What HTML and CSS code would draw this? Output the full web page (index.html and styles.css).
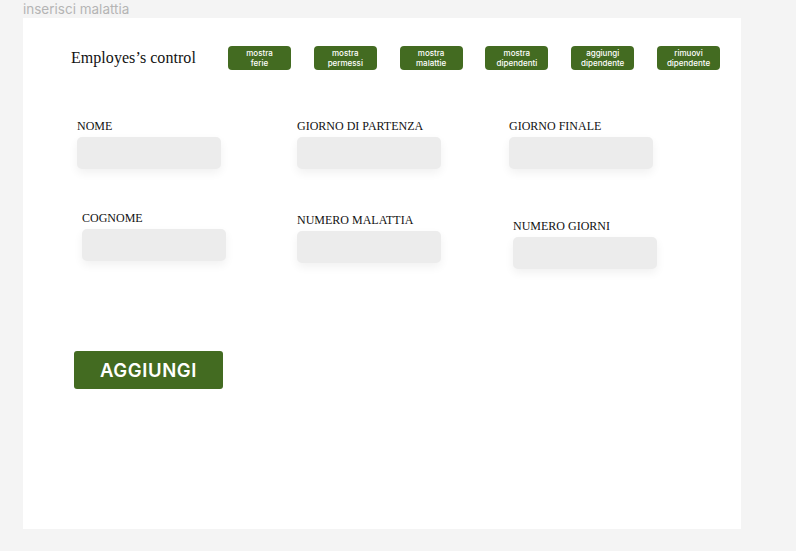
FILE: index.html
```html
<!DOCTYPE html>
<html lang="it">
<head>
<meta charset="utf-8">
<title>inserisci malattia</title>
<link rel="stylesheet" href="styles.css">
</head>
<body>
  <div class="caption">inserisci malattia</div>
  <main class="frame">
    <header class="topbar">
      <h1 class="brand">Employes’s control</h1>
      <nav class="nav">
        <button class="nav-btn">mostra<br>ferie</button>
        <button class="nav-btn">mostra<br>permessi</button>
        <button class="nav-btn">mostra<br>malattie</button>
        <button class="nav-btn">mostra<br>dipendenti</button>
        <button class="nav-btn">aggiungi<br>dipendente</button>
        <button class="nav-btn">rimuovi<br>dipendente</button>
      </nav>
    </header>

    <form class="fields">
      <label class="field">
        <span class="field-label">NOME</span>
        <span class="input"></span>
      </label>
      <label class="field">
        <span class="field-label">GIORNO DI PARTENZA</span>
        <span class="input"></span>
      </label>
      <label class="field">
        <span class="field-label">GIORNO FINALE</span>
        <span class="input"></span>
      </label>

      <label class="field row2 shift-x5">
        <span class="field-label">COGNOME</span>
        <span class="input"></span>
      </label>
      <label class="field row2 drop-2">
        <span class="field-label">NUMERO MALATTIA</span>
        <span class="input"></span>
      </label>
      <label class="field row2 shift-x4 drop-8">
        <span class="field-label">NUMERO GIORNI</span>
        <span class="input"></span>
      </label>
    </form>

    <button class="submit">AGGIUNGI</button>
  </main>
</body>
</html>
```

FILE: styles.css
```css
* { box-sizing: border-box; }

html, body {
  margin: 0;
  padding: 0;
  background: #f4f4f4;
  height: 551px;
  overflow: hidden;
}

.caption {
  font-family: Inter, "Liberation Sans", sans-serif;
  font-size: 13.5px;
  line-height: 18px;
  color: #b4b4b4;
  padding-left: 23px;
  height: 18px;
}

.frame {
  margin-left: 23px;
  width: 718px;
  height: 511px;
  background: #ffffff;
  padding-top: 28px;
}

.topbar {
  display: flex;
  align-items: center;
  padding-left: 48px;
  height: 24px;
}

.brand {
  margin: 0;
  font-family: "Liberation Serif", serif;
  font-weight: 400;
  font-size: 16px;
  line-height: 20px;
  color: #111;
  width: 157px;
  letter-spacing: 0.05px;
}

.nav {
  display: flex;
  gap: 22.8px;
}

.nav-btn {
  width: 63px;
  height: 24px;
  padding: 0;
  border: 0;
  border-radius: 4px;
  background: #436b21;
  color: #fff;
  font-family: Inter, "Liberation Sans", sans-serif;
  font-size: 8px;
  font-weight: 500;
  line-height: 10.5px;
  text-align: center;
}

.fields {
  display: grid;
  grid-template-columns: 220px 212px 150px;
  row-gap: 42px;
  padding-left: 54px;
  margin: 49px 0 0 0;
  align-items: start;
}

.field {
  display: flex;
  flex-direction: column;
  gap: 4px;
}

.field-label {
  font-family: "Liberation Serif", serif;
  font-size: 12px;
  line-height: 14px;
  letter-spacing: 0;
  color: #111;
}

.input {
  display: block;
  width: 144px;
  height: 32px;
  background: #ececec;
  border-radius: 5px;
  box-shadow: 0 4px 10px rgba(0, 0, 0, 0.06);
}

.shift-x5 { margin-left: 5px; }
.shift-x4 { margin-left: 4px; }
.drop-2 { margin-top: 2px; }
.drop-8 { margin-top: 8px; }

.submit {
  display: block;
  margin: 82px 0 0 51px;
  width: 149px;
  height: 38px;
  border: 0;
  border-radius: 3px;
  background: #436b21;
  color: #fff;
  font-family: Inter, "Liberation Sans", sans-serif;
  font-size: 18.5px;
  font-weight: 600;
  letter-spacing: 0.6px;
}
```
